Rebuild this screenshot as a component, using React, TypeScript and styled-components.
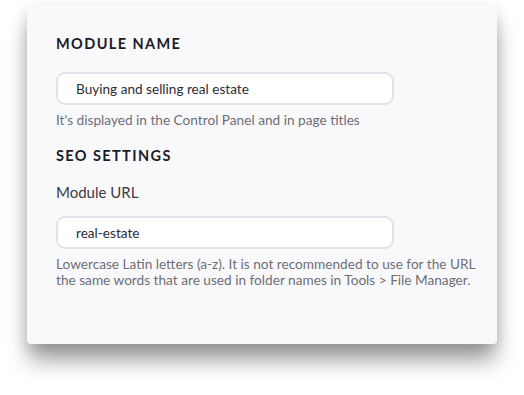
import React from 'react'
import styled, { createGlobalStyle } from 'styled-components'

const GlobalStyle = createGlobalStyle`
  html, body {
    margin: 0;
    padding: 0;
    background: #ffffff;
  }
  body {
    font-family: Lato, "Open Sans", sans-serif;
  }
`

const Page = styled.div`
  box-sizing: border-box;
  width: 524px;
  min-height: 395px;
  padding: 5px 27px 51px;
  background: #ffffff;
`

const Card = styled.div`
  box-sizing: border-box;
  width: 470px;
  height: 339px;
  padding: 29px 16px 29px 29px;
  background: #f9f9fb;
  border-radius: 4px;
  box-shadow: 0 18px 22px -2px rgba(0, 0, 0, 0.38), 0 4px 14px rgba(0, 0, 0, 0.12);
`

const SectionTitle = styled.h2<{ $gap?: number }>`
  margin: ${p => p.$gap ?? 0}px 0 0;
  font-size: 14.5px;
  line-height: 20px;
  font-weight: 700;
  letter-spacing: 1.4px;
  color: #1b1b28;
  text-transform: uppercase;
`

const Label = styled.div`
  margin-top: 16px;
  font-size: 15px;
  line-height: 20px;
  color: #3a3a44;
`

const Field = styled.input<{ $gap: number }>`
  display: block;
  box-sizing: border-box;
  width: 338px;
  height: 33px;
  margin-top: ${p => p.$gap}px;
  padding: 0 18px;
  border: 2px solid #e3e3ea;
  border-radius: 9px;
  background: #ffffff;
  font-family: inherit;
  font-size: 13.6px;
  color: #2c2c34;
  outline: none;
`

const Hint = styled.p`
  margin: 7px 0 0;
  font-size: 13.65px;
  line-height: 16px;
  color: #6e6e76;
`

export default function App() {
  return (
    <Page>
      <GlobalStyle />
      <Card>
        <SectionTitle>Module name</SectionTitle>
        <Field $gap={18} defaultValue="Buying and selling real estate" />
        <Hint>It's displayed in the Control Panel and in page titles</Hint>

        <SectionTitle $gap={18}>SEO settings</SectionTitle>
        <Label>Module URL</Label>
        <Field $gap={14} defaultValue="real-estate" />
        <Hint>
          Lowercase Latin letters (a-z). It is not recommended to use for the URL
          the same words that are used in folder names in Tools &gt; File Manager.
        </Hint>
      </Card>
    </Page>
  )
}
